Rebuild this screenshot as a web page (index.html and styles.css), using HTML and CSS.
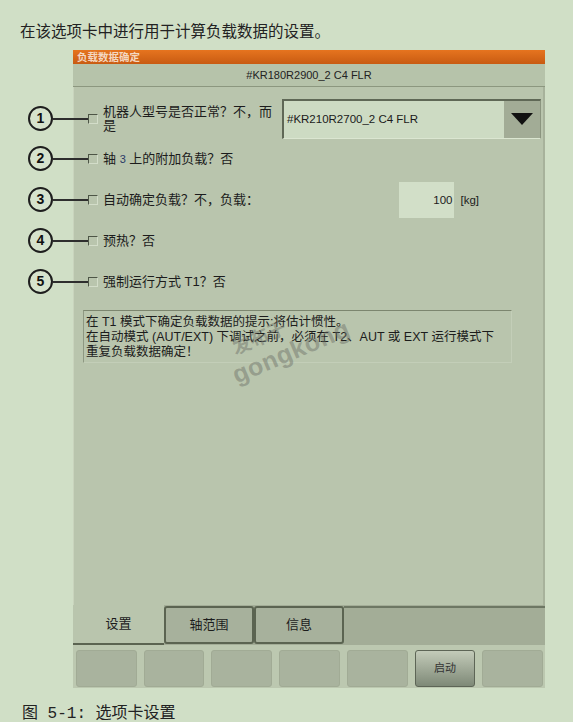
FILE: index.html
```html
<!DOCTYPE html>
<html lang="zh-CN">
<head>
  <meta charset="UTF-8" />
  <meta name="viewport" content="width=device-width, initial-scale=1" />
  <title>负载数据确定</title>
  <link rel="stylesheet" href="styles.css">
</head>
<body>

  <p class="intro">在该选项卡中进行用于计算负载数据的设置。</p>

  <div class="panel">
    <div class="titlebar">负载数据确定</div>
    <div class="subhead">#KR180R2900_2 C4 FLR</div>

    <div class="content">
      <div class="row row-first">
        <span class="callout">1</span><span class="leader"></span><span class="check"></span>
        <span class="label">机器人型号是否正常？不，而<br>是</span>
        <div class="combo">
          <span class="combo-text">#KR210R2700_2 C4 FLR</span>
          <span class="combo-btn">
            <svg width="22" height="12" viewBox="0 0 22 12"><polygon points="0,0 22,0 11,12" fill="#111"/></svg>
          </span>
        </div>
      </div>

      <div class="row">
        <span class="callout">2</span><span class="leader"></span><span class="check"></span>
        <span class="label">轴 <span class="axis">3</span> 上的附加负载？否</span>
      </div>

      <div class="row">
        <span class="callout">3</span><span class="leader"></span><span class="check"></span>
        <span class="label">自动确定负载？不，负载：</span>
        <span class="num-box">100</span>
        <span class="unit">[kg]</span>
      </div>

      <div class="row">
        <span class="callout">4</span><span class="leader"></span><span class="check"></span>
        <span class="label">预热？否</span>
      </div>

      <div class="row">
        <span class="callout">5</span><span class="leader"></span><span class="check"></span>
        <span class="label">强制运行方式 T1？否</span>
      </div>

      <div class="hint">
        在 T1 模式下确定负载数据的提示:将估计惯性。<br>
        在自动模式 (AUT/EXT) 下调试之前，必须在 T2、AUT 或 EXT 运行模式下<br>
        重复负载数据确定！
      </div>

      <div class="watermark"><span class="wm-cn">发布于</span><span class="wm-en">gongkong</span></div>
    </div>

    <div class="tabs">
      <div class="tab active">设置</div>
      <div class="tab">轴范围</div>
      <div class="tab">信息</div>
      <div class="tab-fill"></div>
    </div>

    <div class="softkeys">
      <div class="key"></div>
      <div class="key"></div>
      <div class="key"></div>
      <div class="key"></div>
      <div class="key"></div>
      <div class="key key-on">启动</div>
      <div class="key"></div>
    </div>
  </div>

  <p class="caption">图 <span class="fig-no">5-1:</span> 选项卡设置</p>

</body>
</html>
```

FILE: styles.css
```css
* {
  margin: 0;
  padding: 0;
  box-sizing: border-box;
}

body {
  background-color: #d0dfc6;
  color: #1c1c1c;
  font-family: "Liberation Sans", "Noto Sans CJK SC", sans-serif;
}

.intro {
  padding: 20px 0 0 20px;
  font-family: "Noto Sans CJK SC", sans-serif;
  font-size: 15.5px;
  line-height: 20px;
  color: #222;
}

.panel {
  width: 472px;
  margin: 10px 0 0 73px;
  background-color: #b9c5ad;
}

.titlebar {
  height: 14px;
  padding-left: 4px;
  background: linear-gradient(#e6741f, #c85b12);
  color: #f4d7c0;
  font-size: 10.5px;
  font-weight: bold;
  line-height: 14px;
}

.subhead {
  height: 23px;
  background-color: #b6c3aa;
  border-bottom: 1px solid #8c977f;
  text-align: center;
  font-size: 11px;
  line-height: 22px;
  color: #222;
}

.content {
  position: relative;
  height: 518px;
  padding-top: 12px;
  border-left: 1px solid #c9d4bd;
  border-right: 2px solid #a7b29b;
  font-size: 13px;
}

.row {
  display: flex;
  align-items: center;
  height: 41px;
  margin-left: -46px;
}

.row-first {
  height: 39px;
}

.callout {
  width: 25px;
  height: 25px;
  flex: none;
  border: 2px solid #1e1e1e;
  border-radius: 50%;
  background-color: #d6e3cd;
  text-align: center;
  font-size: 14px;
  font-weight: bold;
  line-height: 21px;
  color: #111;
}

.leader {
  width: 35px;
  height: 2px;
  flex: none;
  background-color: #2e2e2e;
}

.check {
  width: 10px;
  height: 10px;
  flex: none;
  margin-right: 5px;
  border-top: 1px solid #4d5546;
  border-left: 1px solid #4d5546;
  border-right: 1px solid #d3ddc9;
  border-bottom: 1px solid #d3ddc9;
}

.label {
  line-height: 14px;
  color: #1c1c1c;
}

.axis {
  color: #2b3b66;
  font-size: 11px;
}

.combo {
  display: flex;
  width: 259px;
  height: 40px;
  margin: 0 2px 0 auto;
  border-top: 2px solid #5f6856;
  border-left: 2px solid #5f6856;
  border-right: 1px solid #8b957f;
  border-bottom: 1px solid #dbe6d1;
  background-color: #cddbc3;
}

.combo-text {
  flex: 1;
  padding-left: 3px;
  font-size: 11.5px;
  line-height: 36px;
  color: #1a1a1a;
}

.combo-btn {
  display: flex;
  align-items: center;
  justify-content: center;
  width: 36px;
  background-color: #a2ac96;
}

.num-box {
  width: 55px;
  height: 36px;
  margin-left: auto;
  padding-right: 2px;
  background-color: #d2dfc8;
  text-align: right;
  font-size: 11.5px;
  line-height: 36px;
}

.unit {
  margin: 0 64px 0 6px;
  font-size: 11.5px;
}

.hint {
  width: 429px;
  height: 53px;
  margin: 8px 0 0 9px;
  padding: 4px 2px 0;
  border-top: 1px solid #7c866f;
  border-left: 1px solid #8e9882;
  border-right: 1px solid #c3ceb8;
  border-bottom: 1px solid #c3ceb8;
  font-size: 12.5px;
  line-height: 15px;
  white-space: nowrap;
  color: #1c1c1c;
}

.watermark {
  position: absolute;
  left: 150px;
  top: 230px;
  display: flex;
  flex-direction: column;
  transform: rotate(-23deg);
  color: rgba(105, 110, 100, 0.45);
  font-weight: bold;
}

.wm-cn {
  margin-left: 10px;
  font-size: 19px;
  line-height: 22px;
}

.wm-en {
  font-size: 25px;
  line-height: 26px;
  letter-spacing: 0.5px;
}

.tabs {
  display: flex;
  align-items: flex-start;
  height: 40px;
  background-color: #a3ad97;
}

.tab {
  width: 90px;
  height: 38px;
  margin-top: 1px;
  border: 2px solid #5b6451;
  border-radius: 3px;
  background-color: #a7b19c;
  text-align: center;
  font-size: 13px;
  line-height: 34px;
  color: #1c1c1c;
}

.tab.active {
  width: 91px;
  height: 40px;
  margin-top: 0;
  border: none;
  border-bottom: 2px solid #5b6451;
  border-radius: 0;
  background-color: #b9c5ad;
  line-height: 38px;
}

.tab-fill {
  flex: 1;
  height: 2px;
  margin-top: 1px;
  background-color: #6d7763;
}

.softkeys {
  display: grid;
  grid-template-columns: repeat(7, 1fr);
  gap: 7px;
  height: 43px;
  padding: 5px 2px 1px 3px;
  background-color: #bcc8b0;
}

.key {
  border: 1px solid #a1ab95;
  border-radius: 3px;
  background-color: #a9b39e;
  text-align: center;
  font-size: 11px;
  line-height: 35px;
  color: #333;
}

.key-on {
  border: 1px solid #5d6556;
  background: linear-gradient(#c3cbb9, #7e8977);
}

.caption {
  margin: 13px 0 0 22px;
  font-family: "Noto Sans CJK SC", sans-serif;
  font-size: 16px;
  line-height: 20px;
  color: #222;
}

.fig-no {
  margin: 0 6px;
  font-family: "Liberation Mono", monospace;
}
```
